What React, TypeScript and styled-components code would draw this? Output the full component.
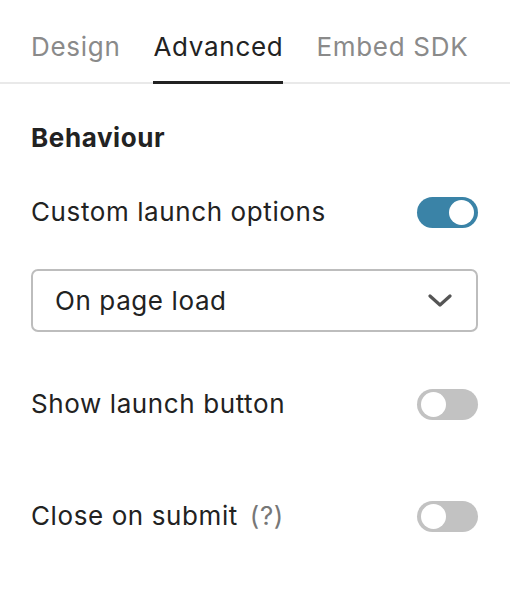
import React, { useState } from "react";
import styled, { createGlobalStyle } from "styled-components";

const GlobalStyle = createGlobalStyle`
    body {
        margin: 0;
        background: #ffffff;
        font-family: Inter, "Noto Sans", sans-serif;
        color: #222222;
    }
`;

type ToggleProps = {
    on: boolean;
    onChange: () => void;
};

const Toggle: React.FC<ToggleProps> = ({ on, onChange }) => {
    return (
        <SwitchTrack $on={on} onClick={onChange}>
            <SwitchKnob $on={on} />
        </SwitchTrack>
    );
};

const tabs = ["Design", "Advanced", "Embed SDK"];

const App: React.FC = () => {
    const [custom, setCustom] = useState(true);
    const [showButton, setShowButton] = useState(false);
    const [closeOnSubmit, setCloseOnSubmit] = useState(false);

    return (
        <Panel>
            <GlobalStyle />
            <TabBar>
                {tabs.map((tab) => (
                    <Tab key={tab} $active={tab === "Advanced"}>
                        {tab}
                    </Tab>
                ))}
            </TabBar>

            <Content>
                <SectionTitle>Behaviour</SectionTitle>

                <Row $gapTop={42}>
                    <Label>Custom launch options</Label>
                    <Toggle on={custom} onChange={() => setCustom(!custom)} />
                </Row>

                <Select>
                    <span>On page load</span>
                    <svg width="24" height="13" viewBox="0 0 24 13">
                        <path
                            d="M2 2 L12 11 L22 2"
                            fill="none"
                            stroke="#555555"
                            strokeWidth="3.2"
                            strokeLinecap="round"
                            strokeLinejoin="round"
                        />
                    </svg>
                </Select>

                <Row $gapTop={56}>
                    <Label>Show launch button</Label>
                    <Toggle on={showButton} onChange={() => setShowButton(!showButton)} />
                </Row>

                <Row $gapTop={80}>
                    <Label>
                        Close on submit <Hint>(?)</Hint>
                    </Label>
                    <Toggle on={closeOnSubmit} onChange={() => setCloseOnSubmit(!closeOnSubmit)} />
                </Row>
            </Content>
        </Panel>
    );
};

const Panel = styled.div`
    width: 510px;
    height: 594px;
    background: #ffffff;
`;

const TabBar = styled.div`
    display: flex;
    gap: 33px;
    padding: 0 31px;
    height: 82px;
    border-bottom: 2px solid #e9e9e9;
    box-sizing: content-box;
`;

const Tab = styled.div<{ $active?: boolean }>`
    display: flex;
    align-items: center;
    padding-top: 12px;
    font-size: 26px;
    letter-spacing: 0.7px;
    color: ${(p) => (p.$active ? "#222222" : "#8a8a8a")};
    border-bottom: 3px solid ${(p) => (p.$active ? "#222222" : "transparent")};
    margin-bottom: -2px;
`;

const Content = styled.div`
    padding: 38px 32px 0 31px;
    display: flex;
    flex-direction: column;
`;

const SectionTitle = styled.div`
    font-size: 26px;
    font-weight: 700;
    letter-spacing: 0.6px;
    line-height: 32px;
    color: #222222;
`;

const Row = styled.div<{ $gapTop?: number }>`
    display: flex;
    align-items: center;
    justify-content: space-between;
    margin-top: ${(p) => p.$gapTop ?? 47}px;
`;

const Label = styled.div`
    font-size: 26px;
    letter-spacing: 0.6px;
    line-height: 32px;
    color: #222222;
`;

const Hint = styled.span`
    color: #777777;
    margin-left: 4px;
`;

const SwitchTrack = styled.div<{ $on: boolean }>`
    width: 61px;
    height: 31px;
    border-radius: 16px;
    background: ${(p) => (p.$on ? "#3a83a7" : "#c2c2c2")};
    display: flex;
    align-items: center;
    justify-content: ${(p) => (p.$on ? "flex-end" : "flex-start")};
    padding: 0 4px;
    box-sizing: border-box;
    cursor: pointer;
`;

const SwitchKnob = styled.div<{ $on: boolean }>`
    width: 25px;
    height: 25px;
    border-radius: 50%;
    background: #ffffff;
`;

const Select = styled.div`
    margin-top: 41px;
    height: 63px;
    box-sizing: border-box;
    border: 2px solid #bdbdbd;
    border-radius: 7px;
    display: flex;
    align-items: center;
    justify-content: space-between;
    padding: 0 24px 0 22px;
    font-size: 26px;
    letter-spacing: 0.6px;
    color: #222222;
`;

export default App;
